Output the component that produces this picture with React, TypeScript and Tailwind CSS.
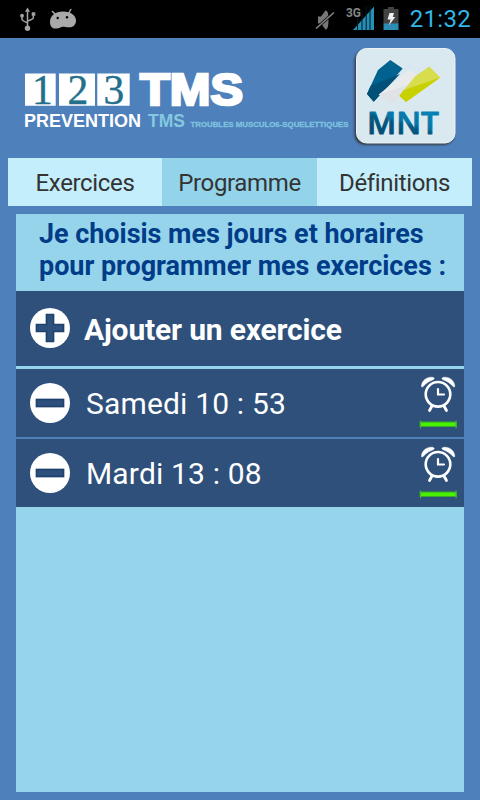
function UsbIcon() {
  return (
    <svg className="absolute left-[20px] top-[7px]" width="16" height="25" viewBox="0 0 16 25" fill="none" stroke="#a3a3a3" strokeWidth="1.5">
      <path d="M7.5 4V21M2 9.5V12.5Q2 13.5 7.3 15.8M13.3 8V11Q13.3 12 7.7 14" />
      <path d="M7.5 .5L10 4.8H5Z" fill="#a3a3a3" stroke="none" />
      <circle cx="2" cy="8.7" r="1.9" fill="#a3a3a3" stroke="none" />
      <rect x="11.7" y="5.3" width="3.6" height="3.4" fill="#a3a3a3" stroke="none" />
      <circle cx="7.5" cy="21.3" r="2.7" fill="#a3a3a3" stroke="none" />
    </svg>
  );
}

function DroidIcon() {
  return (
    <svg className="absolute left-[49px] top-[8px]" width="28" height="22" viewBox="0 0 28 22">
      <path d="M1 14C1 8 6 3.500 14 3.500S27 7.500 27 12.500C27 16.500 24.500 19.500 20 19.300C16.500 19.300 14.500 18.500 12.500 19C10.500 20 8.500 20.500 6 20.500C3 20.500 1 18 1 14Z" fill="#a9a9a9" />
      <path d="M6.500 6.500L3.500 3.500M19.800 5L21.800 1.500" stroke="#a9a9a9" strokeWidth="1.500" strokeLinecap="round" />
      <circle cx="8.700" cy="10" r="1.200" fill="#000" />
      <circle cx="18" cy="9.200" r="1.200" fill="#000" />
    </svg>
  );
}

function StatusIcons() {
  return (
    <svg className="absolute left-[310px] top-0" width="95" height="38" viewBox="310 0 95 38">
      <path d="M318 16.500H321L325.500 10.500Q328.500 10 328.500 19.500Q328.500 30 325.500 29.500L321 23.500H318Z" fill="#777" />
      <path d="M316 28.500L334 12.500" stroke="#000" strokeWidth="3" />
      <path d="M316 28.500L334 12.500" stroke="#888" strokeWidth="1.500" />
      <path d="M353 30L374 6.500V30Z" fill="#268fb4" />
      <path d="M357.500 10V31M362 10V31M366.200 6V31M370 6V31" stroke="#001a25" strokeWidth="1" />
      <text x="346" y="17" fontSize="12.500" textLength="15" lengthAdjust="spacingAndGlyphs" fontWeight="700" fill="#858585" className="font-['Roboto',sans-serif]">3G</text>
      <path d="M388 7H394V9H398.500V24H383.500V9H388Z" fill="#424242" />
      <path d="M383.500 23.500H398.500V30H383.500Z" fill="#2c8db4" />
      <path d="M389.500 13H394L392.800 17H395.300L389 25.300L390.500 19.500H387.500Z" fill="#efefef" />
    </svg>
  );
}

function Logo() {
  return (
    <svg className="block" width="340" height="120" viewBox="0 38 340 120">
      <path d="M25 73.500H55.700V105.700H25ZM59 73.500H95V105.700H59ZM97.300 73.500H129.700V105.700H97.300Z" fill="#fff" />
      <g fill="#236f8c" stroke="#236f8c" strokeWidth=".4" fontSize="41.500" className="font-['Liberation_Serif',serif]">
        <text x="32" y="103.500">1</text>
        <text x="67.500" y="103.500">2</text>
        <text x="103.500" y="103.500">3</text>
      </g>
      <g className="font-['Liberation_Sans',sans-serif]" fontWeight="700">
        <text x="140" y="104.500" fontSize="44.500" textLength="103" lengthAdjust="spacingAndGlyphs" fill="#fff" stroke="#fff" strokeWidth="2.600">TMS</text>
        <text x="24" y="127" fontSize="18.500" textLength="117" lengthAdjust="spacingAndGlyphs" fill="#fff">PREVENTION</text>
        <text x="148" y="127" fontSize="18.500" textLength="37" lengthAdjust="spacingAndGlyphs" fill="#84c9df">TMS</text>
      </g>
    </svg>
  );
}

function LogoSubtitle() {
  return (
    <svg className="absolute left-[188px] top-[118px]" width="164" height="12" viewBox="188 118 164 12">
      <text x="190.500" y="127" fontSize="7.800" fontWeight="700" textLength="158" lengthAdjust="spacingAndGlyphs" fill="#7fc3df" stroke="#7fc3df" strokeWidth=".3" className="font-['Liberation_Sans',sans-serif]">TROUBLES MUSCULO6-SQUELETTIQUES</text>
    </svg>
  );
}

function MntBadge() {
  return (
    <svg className="absolute left-[350px] top-[43px]" width="112" height="108" viewBox="350 43 112 108">
      <defs>
        <linearGradient id="mnt" x1="412" y1="108" x2="404" y2="136" gradientUnits="userSpaceOnUse">
          <stop offset="0" stopColor="#0780b3" /><stop offset=".5" stopColor="#0677a8" /><stop offset=".62" stopColor="#025b85" /><stop offset="1" stopColor="#005078" />
        </linearGradient>
        <filter id="soft"><feGaussianBlur stdDeviation=".8" /></filter>
      </defs>
      <rect x="354.500" y="50" width="99.500" height="95" rx="10" fill="#343c43" filter="url(#soft)" />
      <rect x="356.500" y="48.500" width="98.500" height="94.500" rx="10" fill="#d9e9ef" stroke="#edf3f5" strokeWidth="1" />
      <path d="M390.300 60L402.700 68.500L373.700 101.700L367 94L378 70Z" fill="#00638f" />
      <path d="M370.500 86L400 74L373.700 101.700L367 94Z" fill="#005078" />
      <path d="M406 72.500L411 70L418 76L417 84L392 104L378.700 94.500Z" fill="#e9eaec" />
      <path d="M378.700 94.500L417 82L392 104Z" fill="#e0e3e6" />
      <path d="M429.300 66.500L440.300 77.500L406 102L399.300 95.700L415 76.500Z" fill="#d8dd4e" />
      <path d="M404 90L440.300 77.500L406 102L399.300 95.700Z" fill="#c9d000" />
      <text x="367" y="133.500" fontSize="31.500" fontWeight="600" textLength="72" lengthAdjust="spacingAndGlyphs" fill="url(#mnt)" stroke="url(#mnt)" strokeWidth=".9" strokeLinejoin="round" className="font-['Open_Sans',sans-serif]">MNT</text>
    </svg>
  );
}

function CircleButton({ plus = false }: { plus?: boolean }) {
  return (
    <svg className="ml-[14px] shrink-0" width="40" height="40" viewBox="0 0 40 40">
      <circle cx="20" cy="20" r="20" fill="#fff" />
      {plus ? (
        <path d="M16.500 6.500H23.500V16.500H33.500V23.500H23.500V33.500H16.500V23.500H6.500V16.500H16.500Z" fill="#2d507c" stroke="#1f416e" strokeWidth="1.700" />
      ) : (
        <rect x="6.500" y="16.500" width="27" height="7" fill="#2d507c" stroke="#1f416e" strokeWidth="1.700" />
      )}
    </svg>
  );
}

function AlarmIcon() {
  return (
    <svg className="ml-auto shrink-0" width="46" height="68" viewBox="0 0 46 68" fill="none" stroke="#fff">
      <circle cx="20" cy="25.300" r="12.300" strokeWidth="2.600" />
      <path d="M20 20V25.500H26" strokeWidth="2.200" strokeLinecap="round" />
      <path d="M14 37L11.500 41.500M26 37L28.500 41.500" strokeWidth="2.800" strokeLinecap="round" />
      <path d="M3.500 16.500C4 11.500 9 7.500 14.500 8.300C16.500 8.700 17 10 15 10.800C11 12.300 8 14.300 5.300 17.300C4.200 18.500 3.300 18.300 3.500 16.500ZM36.700 16.500C36.200 11.500 31.200 7.500 25.700 8.300C23.700 8.700 23.200 10 25.200 10.800C29.200 12.300 32.200 14.300 34.900 17.300C36 18.500 36.900 18.300 36.700 16.500Z" fill="#fff" strokeWidth=".5" />
      <rect x="2" y="53" width="36.500" height="4.500" fill="#49f000" stroke="#36a82c" strokeWidth="1" />
      <path d="M2.500 51.500V59.500M38 51.500V59.500" stroke="#4dab48" strokeWidth="1" />
    </svg>
  );
}

function ScheduleRow({ label }: { label: string }) {
  return (
    <div className="flex h-[68px] items-center bg-[#2e507a] text-[30px] tracking-[0.17px] text-white">
      <CircleButton />
      <span className="ml-4 whitespace-nowrap">{label}</span>
      <AlarmIcon />
    </div>
  );
}

export default function App() {
  return (
    <div className="flex h-[800px] w-[480px] flex-col overflow-hidden bg-[#4e80bc] font-['Roboto',sans-serif]">
      <div className="relative flex h-[38px] shrink-0 items-center justify-end bg-black pr-[9px]">
        <UsbIcon />
        <DroidIcon />
        <StatusIcons />
        <span className="text-[24px] tracking-[0.3px] text-[#33b5e5]">21:32</span>
      </div>
      <div className="h-[120px] shrink-0">
        <Logo />
        <LogoSubtitle />
        <MntBadge />
      </div>
      <div className="mx-2 flex h-12 shrink-0 text-center text-[24px] leading-[50px] tracking-[-0.35px] text-[#333]">
        <div className="w-[154px] bg-[#c4eefc]">Exercices</div>
        <div className="w-[155px] bg-[#93d4ea]">Programme</div>
        <div className="w-[155px] bg-[#c4eefc]">Définitions</div>
      </div>
      <div className="mx-4 mt-2 flex h-[578px] shrink-0 flex-col bg-[#96d4ec]">
        <h1 className="h-[77px] pl-[23px] pt-[4px] text-[27px] font-bold leading-8 tracking-[-0.04px] whitespace-nowrap text-[#003c88]">
          Je choisis mes jours et horaires<br />pour programmer mes exercices :
        </h1>
        <div className="flex h-[75px] items-center bg-[#2e507a] pb-px text-[30px] font-bold tracking-[-0.17px] text-white">
          <CircleButton plus />
          <span className="ml-[14px] pt-[3px] whitespace-nowrap">Ajouter un exercice</span>
        </div>
        <div className="mt-[3px] flex flex-col gap-[2px] bg-[#4e80bc]">
          <ScheduleRow label="Samedi 10 : 53" />
          <ScheduleRow label="Mardi 13 : 08" />
        </div>
      </div>
    </div>
  );
}
